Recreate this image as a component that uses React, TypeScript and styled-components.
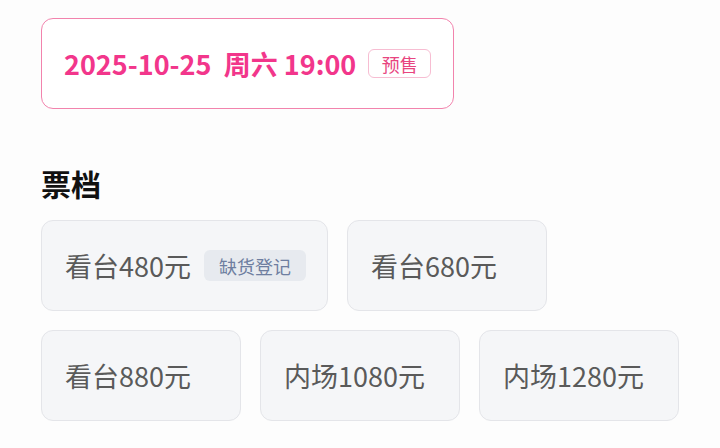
import React from 'react';
import styled, { createGlobalStyle } from 'styled-components';

const GlobalStyle = createGlobalStyle`
  html, body {
    margin: 0;
    padding: 0;
    background: #fdfdfd;
  }
  body {
    font-family: 'Noto Sans CJK SC', 'Noto Sans', sans-serif;
  }
`;

const Page = styled.div`
  width: 720px;
  height: 448px;
  box-sizing: border-box;
  padding: 18px 38px 0 41px;
  overflow: hidden;
`;

const DateCard = styled.div`
  display: inline-flex;
  align-items: center;
  box-sizing: border-box;
  height: 91px;
  padding: 0 22px 0 22px;
  border: 1.5px solid #f283ad;
  border-radius: 12px;
  background: #fff;
`;

const DateText = styled.span`
  font-size: 27px;
  font-weight: 600;
  color: #f2368b;
  white-space: pre;
  letter-spacing: 0px;
`;

const PreSale = styled.span`
  margin-left: 12px;
  display: inline-flex;
  align-items: center;
  justify-content: center;
  box-sizing: border-box;
  width: 63px;
  height: 29px;
  border: 1.5px solid #f7bdd2;
  border-radius: 6px;
  font-size: 18px;
  color: #e8457f;
`;

const SectionTitle = styled.h2`
  margin: 56px 0 19px;
  font-size: 30px;
  line-height: 36px;
  font-weight: 700;
  color: #111;
`;

const TicketGrid = styled.div`
  display: flex;
  flex-wrap: wrap;
  gap: 19px 19px;
`;

const Ticket = styled.div`
  flex: 0 0 auto;
  display: flex;
  align-items: center;
  box-sizing: border-box;
  min-width: 200px;
  height: 91px;
  padding: 0 21px 0 23px;
  border: 1px solid #e4e5e9;
  border-radius: 12px;
  background: #f5f6f8;
`;

const TicketName = styled.span`
  font-size: 27px;
  color: #5a5a5a;
`;

const Tag = styled.span`
  margin-left: 13px;
  display: inline-flex;
  align-items: center;
  padding: 0 15px;
  height: 31px;
  border-radius: 6px;
  background: #e7eaef;
  font-size: 18px;
  color: #6e7ea0;
`;

const tickets = [
  { name: '看台480元', tag: '缺货登记' },
  { name: '看台680元' },
  { name: '看台880元' },
  { name: '内场1080元' },
  { name: '内场1280元' },
];

export default function App() {
  return (
    <>
      <GlobalStyle />
      <Page>
        <DateCard>
          <DateText>{'2025-10-25  周六 19:00'}</DateText>
          <PreSale>预售</PreSale>
        </DateCard>
        <SectionTitle>票档</SectionTitle>
        <TicketGrid>
          {tickets.map((t) => (
            <Ticket key={t.name}>
              <TicketName>{t.name}</TicketName>
              {t.tag && <Tag>{t.tag}</Tag>}
            </Ticket>
          ))}
        </TicketGrid>
      </Page>
    </>
  );
}
